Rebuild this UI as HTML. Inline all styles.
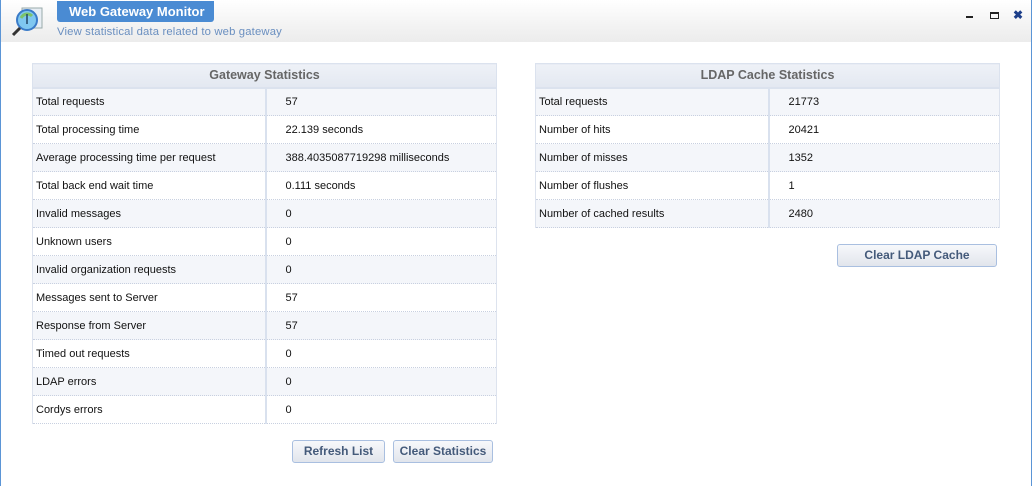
<!DOCTYPE html>
<html><head><style>
*{margin:0;padding:0;box-sizing:border-box}
body{width:1032px;height:486px;background:#fff;font-family:"Liberation Sans",sans-serif;font-size:11px;color:#111;position:relative;overflow:hidden}
.win{position:absolute;left:0;top:0;width:1032px;height:486px;border:1px solid #5b95d6;border-top:none;border-bottom:none}
.head{position:absolute;left:1px;top:0;width:1030px;height:42px;background:linear-gradient(#fff,#f3f3f3 60%,#ececec)}
.tab{position:absolute;left:57px;top:1px;width:157px;height:21px;background:#4a8bd3;border-radius:0 0 3px 3px;color:#fff;font-weight:bold;font-size:13px;line-height:21px;padding-left:12px}
.sub{position:absolute;left:57px;top:26px;color:#6a8fc0;font-size:11.3px;letter-spacing:0.15px}
table{position:absolute;border-collapse:collapse;table-layout:fixed}
th{height:24px;background:linear-gradient(#eef1f7,#e3e8f1);color:#666;font-size:12.5px;font-weight:bold;text-align:center;border:1px solid #dbe2ee;border-bottom:2px solid #dbe2ee}
td{height:28px;padding-left:3px;border-bottom:1px dotted #c8d0e0;border-left:1px solid #dde3ee;border-right:1px solid #dde3ee}
td+td{padding-left:19px;border-left:2px solid #d9e1ee}
tr:nth-child(even) td{background:#f4f6fa}
.btn{position:absolute;height:23px;border:1px solid #a9bfe0;border-radius:3px;background:linear-gradient(#f7f8fb,#e1e5ec);color:#445a7a;font-weight:bold;font-size:12px;text-align:center;line-height:21px}
</style></head><body>
<div class="win"></div>
<div class="head"></div>
<svg style="position:absolute;left:10px;top:6px" width="34" height="32" viewBox="0 0 34 32">
<rect x="12" y="2" width="20" height="20" fill="#e8eef4" stroke="#9aa"/>
<circle cx="17" cy="14" r="10" fill="#7fc7f0" stroke="#3a7bc8" stroke-width="2"/>
<path d="M11 12c3-5 8-5 11-2" stroke="#7cc36b" stroke-width="3" fill="none"/>
<line x1="17" y1="8" x2="17" y2="18" stroke="#246" stroke-width="1.5"/>
<line x1="10" y1="22" x2="3" y2="29" stroke="#333" stroke-width="3"/>
</svg>
<div class="tab">Web Gateway Monitor</div>
<div class="sub">View statistical data related to web gateway</div>
<div style="position:absolute;left:966px;top:16px;width:7px;height:2px;background:#222"></div>
<div style="position:absolute;left:990px;top:12px;width:9px;height:7px;border:1px solid #222;border-top-width:2px"></div>
<div style="position:absolute;left:1013px;top:8px;font-size:12px;font-weight:bold;color:#1d3f8a">✖</div>

<table style="left:32px;top:63px;width:465px">
<colgroup><col style="width:233px"><col></colgroup>
<tr><th colspan="2">Gateway Statistics</th></tr>
<tr><td>Total requests</td><td>57</td></tr>
<tr><td>Total processing time</td><td>22.139 seconds</td></tr>
<tr><td>Average processing time per request</td><td>388.4035087719298 milliseconds</td></tr>
<tr><td>Total back end wait time</td><td>0.111 seconds</td></tr>
<tr><td>Invalid messages</td><td>0</td></tr>
<tr><td>Unknown users</td><td>0</td></tr>
<tr><td>Invalid organization requests</td><td>0</td></tr>
<tr><td>Messages sent to Server</td><td>57</td></tr>
<tr><td>Response from Server</td><td>57</td></tr>
<tr><td>Timed out requests</td><td>0</td></tr>
<tr><td>LDAP errors</td><td>0</td></tr>
<tr><td>Cordys errors</td><td>0</td></tr>
</table>

<table style="left:535px;top:63px;width:465px">
<colgroup><col style="width:233px"><col></colgroup>
<tr><th colspan="2">LDAP Cache Statistics</th></tr>
<tr><td>Total requests</td><td>21773</td></tr>
<tr><td>Number of hits</td><td>20421</td></tr>
<tr><td>Number of misses</td><td>1352</td></tr>
<tr><td>Number of flushes</td><td>1</td></tr>
<tr><td>Number of cached results</td><td>2480</td></tr>
</table>

<div class="btn" style="left:292px;top:440px;width:93px">Refresh List</div>
<div class="btn" style="left:393px;top:440px;width:100px">Clear Statistics</div>
<div class="btn" style="left:837px;top:244px;width:160px">Clear LDAP Cache</div>
</body></html>
